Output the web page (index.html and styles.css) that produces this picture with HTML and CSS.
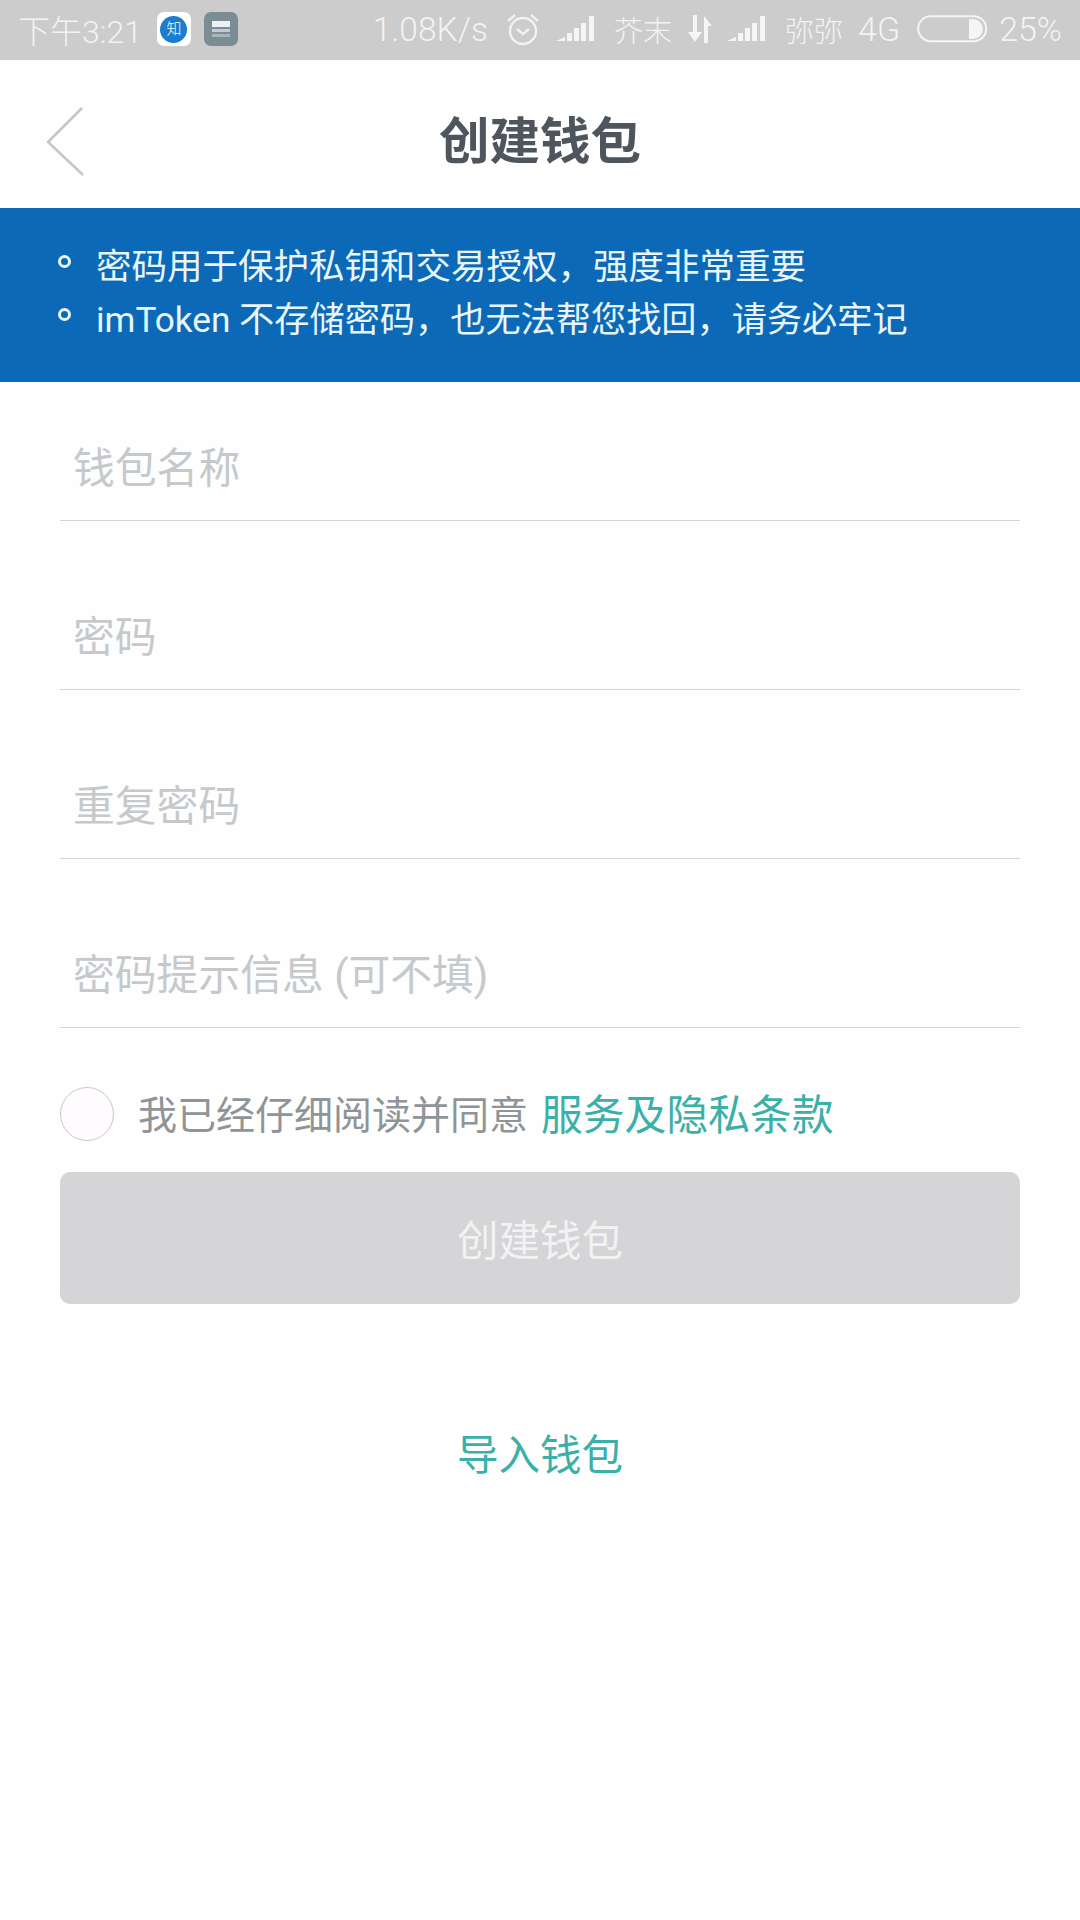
FILE: index.html
```html
<!DOCTYPE html>
<html>
<head>
    <meta charset="utf-8">
    <link rel="stylesheet" href="styles.css">
</head>
<body>
    <div class="status-bar">
        <div class="status-left">
            <span class="status-time">下午3:21</span>
            <span class="app-icon zhihu"><span class="zhihu-dot">知</span></span>
            <span class="app-icon stack">
                <svg width="22" height="20" viewBox="0 0 22 20"><rect x="2" y="2" width="18" height="6" fill="#eef1f2"/><rect x="2" y="10" width="18" height="3" fill="#c3ccd0"/><rect x="2" y="15" width="18" height="3" fill="#aab5ba"/></svg>
            </span>
        </div>
        <div class="status-right">
            <span class="speed">1.08K/s</span>
            <svg class="alarm" width="34" height="34" viewBox="0 0 34 34" fill="none" stroke="#f1f2f1" stroke-width="2.4"><circle cx="17" cy="19" r="13"/><path d="M11 17l6 5 6-5"/><path d="M2 9l7-6M32 9l-7-6"/></svg>
            <svg class="signal" width="40" height="28" viewBox="0 0 40 28" fill="#f4f5f4"><path d="M0 26l9-4v4z"/><rect x="11" y="18" width="5" height="8"/><rect x="18" y="13" width="5" height="13"/><rect x="25" y="8" width="5" height="18"/><rect x="33" y="1" width="5" height="25"/></svg>
            <span class="carrier">芥末</span>
            <svg class="data" width="28" height="30" viewBox="0 0 28 30" fill="#f4f5f4"><path d="M6 1h4v17h5l-7 10-7-10h5z"/><path d="M17 29V2l8 10h-4v17z"/></svg>
            <svg class="signal" width="40" height="28" viewBox="0 0 40 28" fill="#f4f5f4"><path d="M0 26l9-4v4z"/><rect x="11" y="18" width="5" height="8"/><rect x="18" y="13" width="5" height="13"/><rect x="25" y="8" width="5" height="18"/><rect x="33" y="1" width="5" height="25"/></svg>
            <span class="carrier">弥弥</span>
            <span class="net">4G</span>
            <svg class="battery" width="71" height="28" viewBox="0 0 71 28" fill="none"><rect x="1.2" y="1.2" width="68" height="25" rx="12.5" stroke="#f4f5f4" stroke-width="2"/><path d="M52 4h4a10 10 0 0 1 0 20h-4z" fill="#f4f5f4"/></svg>
            <span class="percent">25%</span>
        </div>
    </div>

    <div class="title-bar">
        <svg class="back" width="40" height="72" viewBox="0 0 40 72" fill="none" stroke="#c4c6c7" stroke-width="2.5"><path d="M36 2L2 36l35 33"/></svg>
        <h1>创建钱包</h1>
    </div>

    <div class="notice">
        <div class="notice-row"><span class="ring"></span><span>密码用于保护私钥和交易授权，强度非常重要</span></div>
        <div class="notice-row"><span class="ring"></span><span>imToken 不存储密码，也无法帮您找回，请务必牢记</span></div>
    </div>

    <div class="form">
        <div class="field">钱包名称</div>
        <div class="field">密码</div>
        <div class="field">重复密码</div>
        <div class="field">密码提示信息 (可不填)</div>

        <div class="agree">
            <span class="radio"></span>
            <span class="agree-text">我已经仔细阅读并同意</span>
            <a href="#" class="link terms">服务及隐私条款</a>
        </div>

        <div class="create-button">创建钱包</div>
        <a href="#" class="link import">导入钱包</a>
    </div>
</body>
</html>
```

FILE: styles.css
```css
body {
    margin: 0;
    width: 1080px;
    height: 1920px;
    background-color: #fefefe;
    font-family: "Roboto", "Noto Sans CJK SC", sans-serif;
    overflow: hidden;
}

.status-bar {
    height: 60px;
    background-color: #cbcccb;
    color: #f2f3f2;
    display: flex;
    justify-content: space-between;
    align-items: center;
    padding: 0 18px 2px 18px;
    box-sizing: border-box;
    font-size: 34px;
    font-weight: 300;
}

.status-left,
.status-right {
    display: flex;
    align-items: center;
}

.status-time {
    font-size: 32px;
    margin-right: 15px;
}

.app-icon {
    width: 34px;
    height: 34px;
    border-radius: 7px;
    display: flex;
    align-items: center;
    justify-content: center;
}

.zhihu {
    background-color: #ffffff;
    margin-right: 13px;
}

.zhihu-dot {
    width: 27px;
    height: 27px;
    border-radius: 50%;
    background-color: #1a7dcf;
    color: #ffffff;
    font-size: 15px;
    line-height: 27px;
    text-align: center;
}

.stack {
    background-color: #7b8c94;
}

.speed {
    font-size: 33.5px;
    margin-right: 18px;
}

.alarm {
    margin-right: 16px;
}

.signal {
    margin-right: 18px;
}

.carrier {
    font-size: 29px;
    margin-right: 15px;
}

.data {
    margin-right: 12px;
}

.net {
    margin-right: 17px;
}

.battery {
    margin-right: 11px;
}

.title-bar {
    height: 148px;
    position: relative;
    display: flex;
    align-items: center;
    justify-content: center;
    padding-top: 6px;
    box-sizing: border-box;
}

.title-bar h1 {
    margin: 0;
    font-size: 50.5px;
    font-weight: 700;
    color: #4e555c;
}

.back {
    position: absolute;
    left: 46px;
    top: 46px;
}

.notice {
    height: 174px;
    box-sizing: border-box;
    padding-top: 29px;
    background-color: #0b69b7;
    color: #e8f6fb;
    font-size: 35.5px;
}

.notice-row {
    height: 53px;
    display: flex;
    align-items: center;
    padding-left: 58px;
}

.notice-row + .notice-row {
    font-size: 35.2px;
}

.ring {
    width: 13px;
    height: 13px;
    border: 3px solid #e8f6fb;
    border-radius: 50%;
    box-sizing: border-box;
    margin-right: 25px;
    margin-top: -5px;
}

.form {
    padding: 0 60px;
    display: flex;
    flex-direction: column;
}

.field {
    height: 169px;
    box-sizing: border-box;
    border-bottom: 1.5px solid #d2d5d8;
    padding: 89px 0 0 13px;
    font-size: 41.8px;
    line-height: 56px;
    color: #c6c9cc;
}

.field:first-child {
    height: 139px;
    padding-top: 59px;
}

.agree {
    display: flex;
    align-items: center;
    height: 54px;
    margin-top: 59px;
}

.radio {
    width: 54px;
    height: 54px;
    box-sizing: border-box;
    border: 1.5px solid #cdc5cf;
    border-radius: 50%;
    background-color: #fefcfe;
    margin-right: 24px;
}

.agree-text {
    font-size: 39px;
    color: #8f9497;
    margin-right: 13px;
    padding-bottom: 4px;
}

.link {
    color: #3ab0a8;
    text-decoration: none;
    font-size: 41.5px;
}

.terms {
    font-size: 41.8px;
    padding-bottom: 4px;
}

.create-button {
    height: 132px;
    margin-top: 31px;
    border-radius: 10px;
    background-color: #d5d4d7;
    color: #f2f2f3;
    font-size: 41.5px;
    display: flex;
    align-items: center;
    justify-content: center;
}

.import {
    align-self: center;
    margin-top: 118px;
}
```
